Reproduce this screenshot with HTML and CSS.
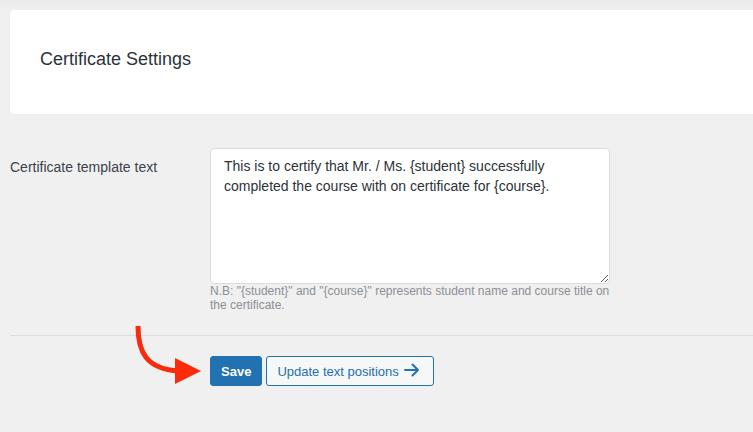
FILE: index.html
```html
<!DOCTYPE html>
<html lang="en">
<head>
<meta charset="utf-8">
<title>Certificate Settings</title>
<link rel="stylesheet" href="styles.css">
</head>
<body>
<div class="page">
  <div class="card">
    <h1 class="card-title">Certificate Settings</h1>
  </div>

  <div class="form-row">
    <label class="field-label" for="tpl">Certificate template text</label>
    <div class="field">
      <textarea id="tpl" class="field-input">This is to certify that Mr. / Ms. {student} successfully completed the course with on certificate for {course}.</textarea>
      <p class="field-desc">N.B: "{student}" and "{course}" represents student name and course title on the certificate.</p>
    </div>
  </div>

  <div class="divider"></div>

  <div class="actions">
    <button class="btn btn-primary" type="button">Save</button>
    <button class="btn btn-secondary" type="button">Update text positions
      <svg class="btn-icon" width="16" height="14" viewBox="0 0 16 14" aria-hidden="true">
        <path d="M1 7 H14 M8.5 1.5 L14 7 L8.5 12.5" fill="none" stroke="#2271b1" stroke-width="2" stroke-linecap="round" stroke-linejoin="round"/>
      </svg>
    </button>
  </div>

  <svg class="annotation" width="753" height="432" viewBox="0 0 753 432" aria-hidden="true">
    <path d="M138 326 C138 352, 146 369, 179 371" fill="none" stroke="#fa2a0a" stroke-width="5"/>
    <polygon points="175,358 201,371 175,384" fill="#fa2a0a"/>
  </svg>
</div>
</body>
</html>
```

FILE: styles.css
```css
* {
  box-sizing: border-box;
}

html, body {
  margin: 0;
  padding: 0;
  background: #f0f0f1;
}

body {
  font-family: "Liberation Sans", Arial, Helvetica, sans-serif;
  color: #3c434a;
  width: 753px;
  height: 432px;
  overflow: hidden;
}

.page {
  position: relative;
  padding: 10px 0 0 10px;
  height: 432px;
  background: linear-gradient(#ebebec, #f0f0f1 10px);
}

.card {
  background: #ffffff;
  height: 104px;
  border-radius: 4px 0 0 4px;
  box-shadow: 0 0 2px rgba(0, 0, 0, 0.05);
  display: flex;
  align-items: center;
  padding: 0 0 6px 30px;
}

.card-title {
  margin: 0;
  font-size: 18px;
  font-weight: 400;
  color: #2c3338;
  line-height: 22px;
}

.form-row {
  display: flex;
  margin-top: 34px;
}

.field-label {
  width: 200px;
  flex: none;
  font-size: 14px;
  line-height: 20px;
  padding-top: 9px;
  color: #3c434a;
}

.field {
  width: 400px;
}

.field-input {
  display: block;
  width: 400px;
  height: 136px;
  margin: 0;
  padding: 7px 13px;
  border: 1px solid #dcdcde;
  border-radius: 4px;
  background: #ffffff;
  font-family: "Liberation Sans", Arial, Helvetica, sans-serif;
  font-size: 14px;
  line-height: 20px;
  color: #2c3338;
  resize: both;
}

.field-desc {
  margin: 0;
  font-size: 12px;
  line-height: 14px;
  color: #8c8f94;
}

.divider {
  height: 1px;
  background: #dcdcde;
  margin-top: 23px;
}

.actions {
  display: flex;
  gap: 4px;
  margin-top: 20px;
  padding-left: 200px;
}

.btn {
  height: 30px;
  border-radius: 3px;
  font-family: "Liberation Sans", Arial, Helvetica, sans-serif;
  font-size: 13px;
  display: inline-flex;
  align-items: center;
  cursor: pointer;
}

.btn-primary {
  background: #2271b1;
  border: 1px solid #2271b1;
  color: #ffffff;
  font-weight: 700;
  padding: 0 10px;
}

.btn-secondary {
  background: #f6f7f7;
  border: 1px solid #2271b1;
  color: #2271b1;
  padding: 0 13px 0 10px;
  gap: 5px;
}

.btn-icon {
  display: block;
  margin-top: -3px;
}

.annotation {
  position: absolute;
  left: 0;
  top: 0;
  pointer-events: none;
}
```
